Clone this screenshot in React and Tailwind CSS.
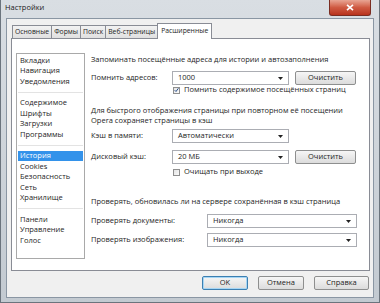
import React from "react";

const font = { fontFamily: '"Open Sans", "Noto Sans", sans-serif' };

function Select({ value, className }) {
  return (
    <div
      className={`flex h-[14px] items-center justify-between border border-[#abadb3] bg-white pl-[5px] pr-[5px] ${className}`}
    >
      <span className="leading-none">{value}</span>
      <svg width="5" height="3" viewBox="0 0 5 3">
        <path d="M0 0h5L2.5 3z" fill="#222" />
      </svg>
    </div>
  );
}

function Button({ children, className = "", primary }) {
  return (
    <div
      className={`flex h-[14px] items-center justify-center rounded-[2px] border bg-gradient-to-b from-[#f6f6f6] to-[#dcdcdc] leading-none ${
        primary ? "border-[#3c7fb1] shadow-[inset_0_0_0_1px_#a6d6f5]" : "border-[#8e8f8f]"
      } ${className}`}
    >
      {children}
    </div>
  );
}

function Check({ checked, label }) {
  return (
    <div className="flex items-center gap-[4px] pl-[82px]">
      <div className="flex h-[7px] w-[7px] items-center justify-center border border-[#8f8f8f] bg-gradient-to-br from-[#e4e4e4] to-[#fafafa]">
        {checked && (
          <svg width="6" height="6" viewBox="0 0 6 6">
            <path d="M0.8 3.2L2.4 4.8L5.3 0.9" stroke="#2a4f8a" strokeWidth="1.2" fill="none" />
          </svg>
        )}
      </div>
      <span className="leading-none">{label}</span>
    </div>
  );
}

const groups = [
  ["Вкладки", "Навигация", "Уведомления"],
  ["Содержимое", "Шрифты", "Загрузки", "Программы"],
  ["История", "Cookies", "Безопасность", "Сеть", "Хранилище"],
  ["Панели", "Управление", "Голос"],
];

const tabs = ["Основные", "Формы", "Поиск", "Веб-страницы"];

export default function App() {
  return (
    <div
      className="flex h-[303px] w-[380px] flex-col border border-t-0 border-[#6b747d] bg-gradient-to-b from-[#d9dee3] to-[#c3cad1] text-[7.5px] text-[#1e1e1e]"
      style={font}
    >
      {/* title bar */}
      <div className="flex h-[18px] shrink-0 items-start justify-between">
        <span className="pl-[4px] pt-[4px] text-[7.5px] leading-none text-[#222]">Настройки</span>
        <div className="mr-[8px] flex h-[16px] w-[42px] items-center justify-center rounded-b-[3px] border border-t-0 border-[#7a2d22] bg-gradient-to-b from-[#e8a594] via-[#cf5a42] to-[#b8321d]">
          <svg width="8" height="7" viewBox="0 0 8 7">
            <path d="M1 0.8L7 6.2M7 0.8L1 6.2" stroke="#fff" strokeWidth="1.6" />
          </svg>
        </div>
      </div>

      {/* client area */}
      <div className="mx-[5px] mb-[4px] flex flex-1 flex-col border border-[#8a96a3] bg-[#f0f0f0] pl-[4px] pr-[3px]">
        {/* tabs */}
        <div className="mt-[4px] flex h-[15px] items-end pl-[1px] text-[6.8px]">
          {tabs.map((t) => (
            <div
              key={t}
              className="-mr-px flex h-[13px] items-center border border-b-0 border-[#898c95] bg-gradient-to-b from-[#f2f2f2] to-[#e0e0e0] px-[2px] leading-none"
            >
              {t}
            </div>
          ))}
          <div className="relative z-10 -mb-px flex h-[16px] items-center border border-b-0 border-[#898c95] bg-white px-[3px] leading-none">
            Расширенные
          </div>
        </div>

        {/* tab panel */}
        <div className="flex h-[233px] border border-[#898c95] bg-white pl-[4px] pt-[14px]">
          <div className="h-[206px] w-[69px] shrink-0 border border-[#a9a9a9] bg-white pt-[1px]">
            {groups.map((g, gi) => (
              <div key={gi}>
                {gi > 0 && <div className="mx-[1px] my-[5px] h-px bg-[#e3e3e3]" />}
                {g.map((item) => (
                  <div
                    key={item}
                    className={`mx-[1px] flex h-[10.5px] items-center pl-[2px] leading-none ${
                      item === "История" ? "bg-[#3392ea] text-white" : ""
                    }`}
                  >
                    {item}
                  </div>
                ))}
              </div>
            ))}
          </div>

          <div className="ml-[6px] flex flex-1 flex-col">
            <div className="flex h-[14px] items-center leading-none">
              Запоминать посещённые адреса для истории и автозаполнения
            </div>
            <div className="mt-[4px] flex h-[14px] items-center">
              <span className="w-[81px] leading-none">Помнить адресов:</span>
              <Select value="1000" className="w-[117px]" />
              <Button className="ml-[6px] w-[61px]">Очистить</Button>
            </div>
            <div className="flex h-[10px] items-center">
              <Check checked label="Помнить содержимое посещённых страниц" />
            </div>
            <div className="mt-[10px] leading-[10px]">
              <div>Для быстрого отображения страницы при повторном её посещении</div>
              <div>Opera сохраняет страницы в кэш</div>
            </div>
            <div className="mt-[4px] flex h-[14px] items-center">
              <span className="w-[81px] leading-none">Кэш в памяти:</span>
              <Select value="Автоматически" className="w-[117px]" />
            </div>
            <div className="mt-[7px] flex h-[14px] items-center">
              <span className="w-[81px] leading-none">Дисковый кэш:</span>
              <Select value="20 МБ" className="w-[117px]" />
              <Button className="ml-[6px] w-[61px]">Очистить</Button>
            </div>
            <div className="mt-[3px] flex h-[10px] items-center">
              <Check label="Очищать при выходе" />
            </div>
            <div className="mt-[20px] flex h-[10px] items-center leading-none">
              Проверять, обновилась ли на сервере сохранённая в кэш страница
            </div>
            <div className="mt-[7px] flex h-[14px] items-center">
              <span className="w-[116px] leading-none">Проверять документы:</span>
              <Select value="Никогда" className="w-[150px]" />
            </div>
            <div className="mt-[5px] flex h-[14px] items-center">
              <span className="w-[116px] leading-none">Проверять изображения:</span>
              <Select value="Никогда" className="w-[150px]" />
            </div>
          </div>
        </div>

        {/* dialog buttons */}
        <div className="mt-[5px] flex justify-end gap-[10px] pr-[1px]">
          <Button primary className="w-[46px]">OK</Button>
          <Button className="w-[46px]">Отмена</Button>
          <Button className="w-[55px]">Справка</Button>
        </div>
      </div>
    </div>
  );
}
